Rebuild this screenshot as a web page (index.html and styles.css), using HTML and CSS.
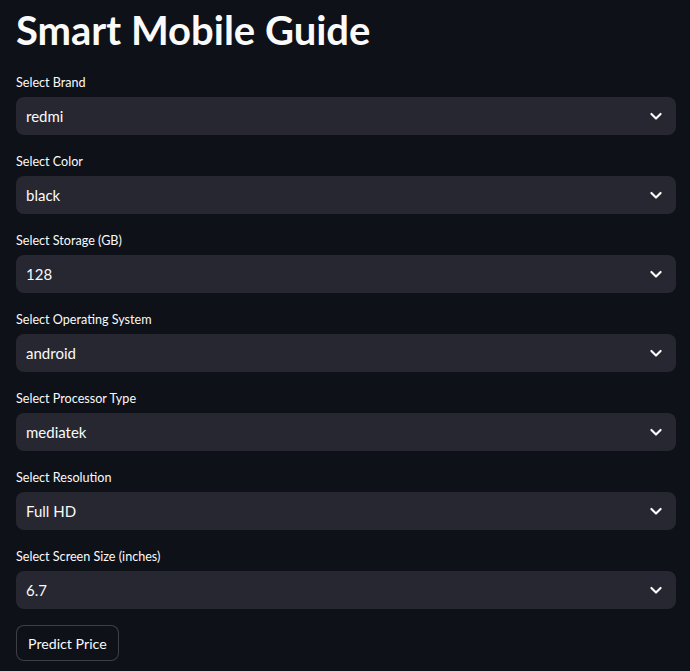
FILE: index.html
```html
<!DOCTYPE html>
<html>
<head>
<meta charset="utf-8">
<link rel="stylesheet" href="styles.css">
</head>
<body>
<main class="app">
  <h1 class="title">Smart Mobile Guide</h1>
  <div class="field">
    <label class="label">Select Brand</label>
    <div class="select"><span>redmi</span><svg class="chev" viewBox="0 0 24 24"><path d="M6.5 9.5l5.5 5.5 5.5-5.5"/></svg></div>
  </div>
  <div class="field">
    <label class="label">Select Color</label>
    <div class="select"><span>black</span><svg class="chev" viewBox="0 0 24 24"><path d="M6.5 9.5l5.5 5.5 5.5-5.5"/></svg></div>
  </div>
  <div class="field">
    <label class="label">Select Storage (GB)</label>
    <div class="select"><span>128</span><svg class="chev" viewBox="0 0 24 24"><path d="M6.5 9.5l5.5 5.5 5.5-5.5"/></svg></div>
  </div>
  <div class="field">
    <label class="label">Select Operating System</label>
    <div class="select"><span>android</span><svg class="chev" viewBox="0 0 24 24"><path d="M6.5 9.5l5.5 5.5 5.5-5.5"/></svg></div>
  </div>
  <div class="field">
    <label class="label">Select Processor Type</label>
    <div class="select"><span>mediatek</span><svg class="chev" viewBox="0 0 24 24"><path d="M6.5 9.5l5.5 5.5 5.5-5.5"/></svg></div>
  </div>
  <div class="field">
    <label class="label">Select Resolution</label>
    <div class="select"><span>Full HD</span><svg class="chev" viewBox="0 0 24 24"><path d="M6.5 9.5l5.5 5.5 5.5-5.5"/></svg></div>
  </div>
  <div class="field">
    <label class="label">Select Screen Size (inches)</label>
    <div class="select"><span>6.7</span><svg class="chev" viewBox="0 0 24 24"><path d="M6.5 9.5l5.5 5.5 5.5-5.5"/></svg></div>
  </div>
  <div class="actions">
    <button class="btn">Predict Price</button>
  </div>
</main>
</body>
</html>
```
FILE: styles.css
```css
html, body {
  margin: 0;
  padding: 0;
  background: #0e1117;
  color: #fafafa;
  font-family: "Source Sans Pro", Lato, "Noto Sans", sans-serif;
}
.app {
  padding: 0 14px 0 16px;
  display: flex;
  flex-direction: column;
}
.title {
  margin: 0;
  padding: 8px 0 0;
  font-size: 40px;
  font-weight: 700;
  line-height: 44px;
  height: 62px;
}
.field {
  display: flex;
  flex-direction: column;
  height: 79px;
}
.label {
  font-size: 12.6px;
  line-height: 24px;
  height: 27px;
  padding-top: 1px;
  box-sizing: border-box;
}
.select {
  height: 38px;
  background: #262730;
  border-radius: 8px;
  display: flex;
  align-items: center;
  justify-content: space-between;
  padding: 0 10px;
  font-size: 15px;
}
.chev {
  width: 20px;
  height: 20px;
  fill: none;
  stroke: #fafafa;
  stroke-width: 2.6;
  stroke-linecap: round;
  stroke-linejoin: round;
}
.actions {
  padding-top: 2px;
}
.btn {
  background: #0e1117;
  color: #fafafa;
  border: 1px solid rgba(250,250,250,0.2);
  border-radius: 8px;
  height: 36px;
  padding: 0 11px;
  font-family: inherit;
  font-size: 14.2px;
}
```
